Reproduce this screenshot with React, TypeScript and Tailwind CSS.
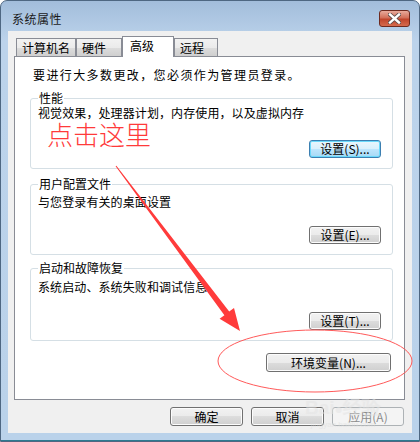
import React from 'react';

const font = { fontFamily: '"Noto Sans CJK SC", "Liberation Sans", sans-serif' };

type BtnProps = {
  label: string;
  className?: string;
  kind?: 'normal' | 'focus' | 'disabled';
};

const WinButton = ({ label, className = '', kind = 'normal' }: BtnProps) => {
  const look =
    kind === 'focus'
      ? 'border-[#3c7fb1] bg-[linear-gradient(#eaf6fd,#d9f0fc_50%,#bee6fd_50%,#a7d9f5)] shadow-[inset_0_0_0_1px_#6ad9fb] text-black'
      : kind === 'disabled'
      ? 'border-[#adb2b5] bg-[#f4f4f4] text-[#8c8c8c]'
      : 'border-[#707070] bg-[linear-gradient(#f2f2f2,#ebebeb_50%,#dddddd_50%,#cfcfcf)] shadow-[inset_0_0_0_1px_#fcfcfc] text-black';
  return (
    <div
      className={`flex items-center justify-center rounded-[3px] border text-[12px] leading-none ${look} ${className}`}
    >
      {label}
    </div>
  );
};

type GroupProps = {
  title: string;
  desc: string;
  button: string;
  focus?: boolean;
  className?: string;
  descGap: string;
  btnGap: string;
};

const Group = ({ title, desc, button, focus, className = '', descGap, btnGap }: GroupProps) => (
  <fieldset
    className={`ml-[15px] mr-[11px] rounded-[3px] border border-[#d5dfe5] pl-[7px] pr-[11px] pb-[10px] ${className}`}
  >
    <legend className="px-[1px] text-[12px] leading-[16px] text-black">{title}</legend>
    <p className={`text-[12px] leading-[16px] tracking-[0.1px] text-black ${descGap}`}>{desc}</p>
    <div className={`flex justify-end ${btnGap}`}>
      <WinButton label={button} kind={focus ? 'focus' : 'normal'} className="h-[18px] w-[72px]" />
    </div>
  </fieldset>
);

const tabs = [
  { name: '计算机名', w: 'w-[60px]' },
  { name: '硬件', w: 'w-[46px]' },
  { name: '高级', w: 'w-[52px]', active: true },
  { name: '远程', w: 'w-[44px]' },
];

export default function App() {
  return (
    <div className="relative h-[442px] w-[420px] overflow-hidden bg-white" style={font}>
      <div className="flex h-[442px] w-[420px] flex-col rounded-t-[7px] border border-[#4e6782] bg-[linear-gradient(#a2bddb,#bcd3eb_40px,#bad2ea)]">
        {/* title bar */}
        <div className="flex h-[30px] items-start justify-between pl-[11px] pr-[9px] pt-[9px]">
          <span className="text-[12px] leading-[18px] tracking-[0.5px] text-[#1b1b1b]">系统属性</span>
          <div className="flex h-[17px] w-[31px] items-center justify-center rounded-[3px] border border-[#6e2a1f] bg-[linear-gradient(#e8ab9c,#d2705a_45%,#c0452c_55%,#d56b4e)]">
            <svg width="13" height="11" viewBox="0 0 13 11">
              <path d="M2 1.5 L11 9.5 M11 1.5 L2 9.5" stroke="#5a4a48" strokeWidth="4" strokeLinecap="square" />
              <path d="M2 1.5 L11 9.5 M11 1.5 L2 9.5" stroke="#ffffff" strokeWidth="2.4" strokeLinecap="square" />
            </svg>
          </div>
        </div>

        {/* client area */}
        <div className="ml-[7px] flex h-[402px] w-[404px] flex-col bg-[#f0f0f0]">
          <div className="flex h-[25px] items-end pl-[8px]">
            {tabs.map((t) =>
              t.active ? (
                <div
                  key={t.name}
                  className={`relative z-10 -mb-px flex h-[21px] items-start border border-b-0 border-[#898c95] bg-white pl-[7px] pt-[1px] text-[12px] leading-[16px] text-black ${t.w}`}
                >
                  {t.name}
                </div>
              ) : (
                <div
                  key={t.name}
                  className={`flex h-[18px] items-start border border-b-0 border-[#898c95] bg-[linear-gradient(#f2f2f2,#ebebeb_50%,#dddddd_50%,#cfcfcf)] pl-[5px] pt-[1px] text-[12px] leading-[16px] text-black ${t.w}`}
                >
                  {t.name}
                </div>
              )
            )}
          </div>

          {/* tab panel */}
          <div className="ml-[6px] flex h-[344px] w-[391px] flex-col border border-[#898c95] bg-white">
            <p className="pl-[18px] pt-[10px] text-[12px] leading-[16px] tracking-[1.4px] text-black">
              要进行大多数更改，您必须作为管理员登录。
            </p>
            <Group
              className="mt-[7px]"
              title="性能"
              desc="视觉效果，处理器计划，内存使用，以及虚拟内存"
              button="设置(S)..."
              focus
              descGap="-mt-[1px]"
              btnGap="mt-[19px]"
            />
            <Group
              className="mt-[7px]"
              title="用户配置文件"
              desc="与您登录有关的桌面设置"
              button="设置(E)..."
              descGap="mt-[2px]"
              btnGap="mt-[16px]"
            />
            <Group
              className="mt-[5px]"
              title="启动和故障恢复"
              desc="系统启动、系统失败和调试信息"
              button="设置(T)..."
              descGap="mt-[3px]"
              btnGap="mt-[17px]"
            />
            <div className="mr-[13px] mt-[12px] flex justify-end">
              <WinButton label="环境变量(N)..." className="h-[19px] w-[125px]" />
            </div>
          </div>

          {/* bottom buttons */}
          <div className="mt-[7px] flex justify-end gap-[8px] pr-[8px]">
            <WinButton label="确定" className="h-[19px] w-[73px]" />
            <WinButton label="取消" className="h-[19px] w-[73px]" />
            <WinButton label="应用(A)" kind="disabled" className="h-[19px] w-[72px]" />
          </div>
        </div>
        <div className="mt-auto h-[1px] w-full bg-[#2d7a90]" />
      </div>

      {/* annotations drawn on top of the screenshot */}
      <span className="pointer-events-none absolute left-[47px] top-[121px] text-[26px] font-light leading-[26px] text-[#ff3a3a]">
        点击这里
      </span>
      <svg className="pointer-events-none absolute left-0 top-0" width="420" height="442">
        <ellipse cx="315" cy="361" rx="97" ry="31" fill="none" stroke="#ff5a5a" strokeWidth="1" />
        <polygon
          points="116.4,165.7 229.2,311.6 234,308 240,331 219.6,318.8 224.4,315.2 115.6,166.3"
          fill="#ff3b3b"
        />
      </svg>
      <div className="pointer-events-none absolute left-[305px] top-[397px] flex flex-col items-center opacity-50">
        <span className="text-[19px] font-bold leading-[22px] text-[#e4e4e4]" style={{ fontFamily: '"Liberation Sans", sans-serif' }}>
          Bai<span className="text-[14px]">●</span>经验
        </span>
        <span className="text-[8px] leading-[10px] text-[#dcdcdc]" style={{ fontFamily: '"Liberation Sans", sans-serif' }}>
          jingyan.baidu.com
        </span>
      </div>
    </div>
  );
}
